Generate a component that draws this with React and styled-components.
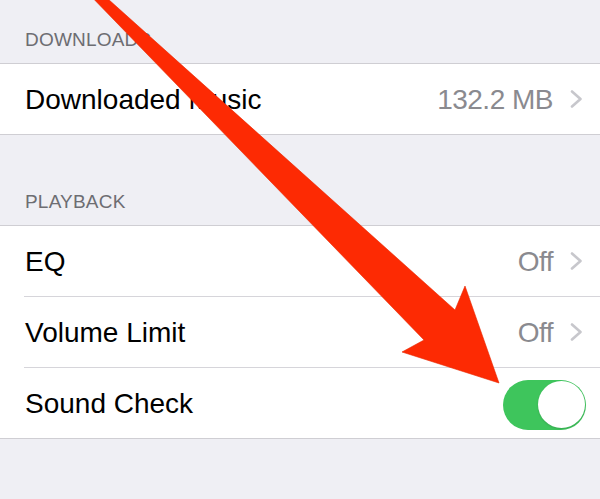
import React from "react";
import styled, { createGlobalStyle } from "styled-components";

const Global = createGlobalStyle`
  html, body {
    margin: 0;
    padding: 0;
    background: #efeff4;
  }
  body {
    font-family: "Liberation Sans", Arial, sans-serif;
    -webkit-font-smoothing: antialiased;
  }
`;

const Screen = styled.div`
  position: relative;
  width: 600px;
  height: 499px;
  overflow: hidden;
  background: #efeff4;
  display: flex;
  flex-direction: column;
`;

const SectionHeader = styled.div`
  height: ${(p) => p.$h}px;
  box-sizing: border-box;
  display: flex;
  align-items: flex-end;
  padding: 0 0 14px 25px;
  font-size: 19px;
  line-height: 19px;
  color: #6d6d72;
  letter-spacing: 0.2px;
`;

const Group = styled.div`
  background: #ffffff;
  border-top: 1px solid #cfced3;
  border-bottom: 1px solid #cfced3;
  display: flex;
  flex-direction: column;
`;

const Row = styled.div`
  height: 70px;
  box-sizing: border-box;
  display: flex;
  align-items: center;
  padding: 2px ${(p) => (p.$toggle ? 14 : 17)}px 0 25px;
  font-size: 28px;
  color: #000;
`;

const Separator = styled.div`
  height: 1px;
  margin-left: 24px;
  background: #d6d5da;
`;

const Label = styled.span`
  flex: 1;
`;

const Value = styled.span`
  color: #8a8a8f;
  margin-right: 17px;
  letter-spacing: -0.5px;
`;

const Switch = styled.div`
  width: 83px;
  height: 50px;
  border-radius: 25px;
  background: #3ec55c;
  position: relative;
  flex: none;
  margin-top: 1px;
`;

const Knob = styled.div`
  position: absolute;
  top: 1.5px;
  right: 1.5px;
  width: 47px;
  height: 47px;
  border-radius: 50%;
  background: #fff;
  box-shadow: 0 1px 2px rgba(0, 0, 0, 0.15);
`;

const Overlay = styled.svg`
  position: absolute;
  top: 0;
  left: 0;
  pointer-events: none;
`;

const Chevron = () => (
  <svg width="13" height="18" viewBox="0 0 13 18" style={{ flex: "none", marginTop: "-2px" }}>
    <polyline
      points="2,1.5 10.5,9 2,16.5"
      fill="none"
      stroke="#c7c7cc"
      strokeWidth="2.6"
      strokeLinecap="round"
      strokeLinejoin="round"
    />
  </svg>
);

const LinkRow = ({ label, value }) => (
  <Row>
    <Label>{label}</Label>
    <Value>{value}</Value>
    <Chevron />
  </Row>
);

export default function App() {
  return (
    <>
      <Global />
      <Screen>
        <SectionHeader $h={63}>DOWNLOADS</SectionHeader>
        <Group>
          <LinkRow label="Downloaded Music" value="132.2 MB" />
        </Group>
        <SectionHeader $h={90}>PLAYBACK</SectionHeader>
        <Group>
          <LinkRow label="EQ" value="Off" />
          <Separator />
          <LinkRow label="Volume Limit" value="Off" />
          <Separator />
          <Row $toggle>
            <Label>Sound Check</Label>
            <Switch>
              <Knob />
            </Switch>
          </Row>
        </Group>
        <Overlay width="600" height="499" viewBox="0 0 600 499">
          <polygon
            points="85,-10 98,-10 455,310 465,286 499,383 402,352 424,340"
            fill="#fd2a03"
            stroke="#e82600"
            strokeWidth="0.6"
            strokeLinejoin="miter"
          />
        </Overlay>
      </Screen>
    </>
  );
}
